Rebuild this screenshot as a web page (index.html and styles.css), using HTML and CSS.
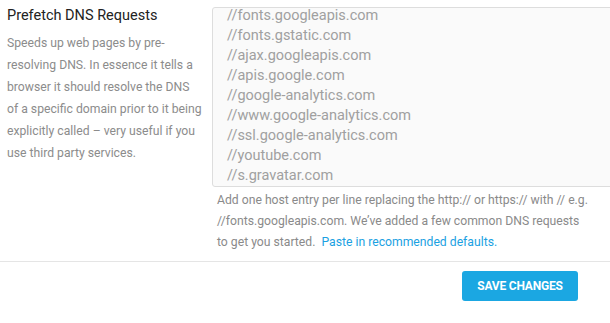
FILE: index.html
```html
<!DOCTYPE html>
<html>
<head>
<meta charset="utf-8">
<link rel="stylesheet" href="styles.css">
</head>
<body>
<div class="page">
  <div class="row">
    <div class="label-col">
      <h3 class="title">Prefetch DNS Requests</h3>
      <p class="desc">Speeds up web pages by pre-resolving DNS. In essence it tells a browser it should resolve the DNS<br>of a specific domain prior to it being explicitly called – very useful if you use third party services.</p>
    </div>
    <div class="field-col">
      <div class="textarea">
        <div class="lines">//fonts.googleapis.com
//fonts.gstatic.com
//ajax.googleapis.com
//apis.google.com
//google-analytics.com
//www.google-analytics.com
//ssl.google-analytics.com
//youtube.com
//s.gravatar.com</div>
      </div>
      <p class="help">Add one host entry per line replacing the http:// or https:// with // e.g.<br>//fonts.googleapis.com. We’ve added a few common DNS requests<br>to get you started. <a class="link" href="#">Paste in recommended defaults.</a></p>
    </div>
  </div>
  <div class="footer">
    <button class="save">SAVE CHANGES</button>
  </div>
</div>
</body>
</html>
```

FILE: styles.css
```css
html, body {
  margin: 0;
  padding: 0;
  background: #ffffff;
  overflow: hidden;
}
body {
  font-family: Roboto, "Noto Sans", sans-serif;
  width: 610px;
}
.page {
  padding-top: 6px;
}
.row {
  display: flex;
  padding-left: 7px;
  padding-bottom: 8px;
  border-bottom: 1px solid #e5e5e5;
}
.label-col {
  width: 205px;
  flex: none;
}
.title {
  margin: 0;
  font-size: 14.5px;
  line-height: 20px;
  font-weight: 400;
  color: #222222;
}
.desc {
  margin: 6px 0 0;
  width: 200px;
  font-size: 12.2px;
  line-height: 22px;
  color: #8c8c8c;
}
.field-col {
  flex: none;
  width: 420px;
  padding-top: 1px;
}
.textarea {
  box-sizing: border-box;
  width: 420px;
  height: 180px;
  border: 1px solid #dddddd;
  border-radius: 3px;
  background: #fafafa;
  overflow: hidden;
  padding-left: 14px;
}
.lines {
  margin-top: -2px;
  white-space: pre;
  font-size: 14.5px;
  line-height: 20px;
  color: #a0a0a0;
}
.help {
  margin: 3px 0 0 5px;
  white-space: nowrap;
  font-size: 12.2px;
  line-height: 21px;
  color: #8a8a8a;
}
.link {
  color: #1ba1e2;
  text-decoration: none;
  margin-left: 3px;
}
.footer {
  display: flex;
  justify-content: flex-end;
  padding: 9px 32px 0 0;
}
.save {
  width: 116px;
  height: 30px;
  border: none;
  border-radius: 3px;
  background: #1ba7e2;
  color: #ffffff;
  font-family: Roboto, sans-serif;
  font-weight: 700;
  font-size: 12px;
  letter-spacing: -0.2px;
  padding: 0;
}
```
